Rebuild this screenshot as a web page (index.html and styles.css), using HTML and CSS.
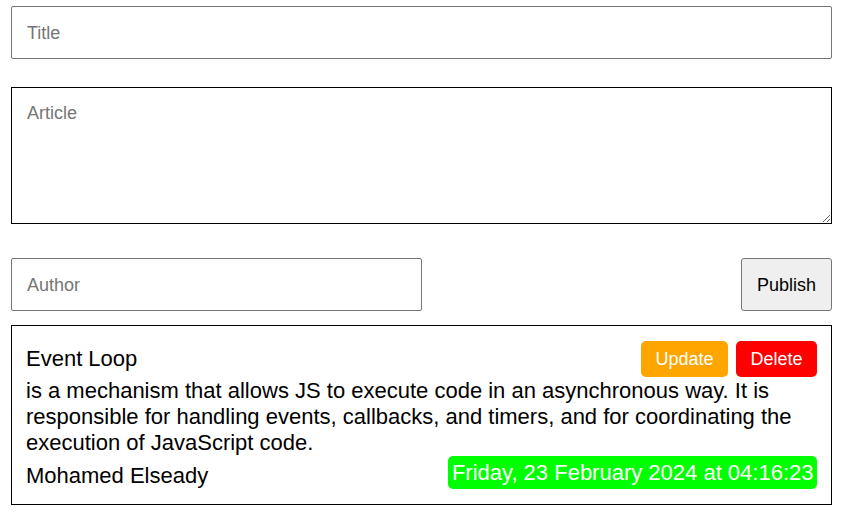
FILE: index.html
```html
<!DOCTYPE html>
<html>
<head>
<meta charset="utf-8">
<link rel="stylesheet" href="styles.css">
</head>
<body>
<div class="page">
  <input class="field title" type="text" placeholder="Title">
  <textarea class="field article" placeholder="Article"></textarea>
  <div class="row">
    <input class="field author" type="text" placeholder="Author">
    <button class="publish">Publish</button>
  </div>
  <div class="card">
    <div class="card-head">
      <span class="card-title">Event Loop</span>
      <div class="actions">
        <button class="btn update">Update</button>
        <button class="btn delete">Delete</button>
      </div>
    </div>
    <p class="card-body">is a mechanism that allows JS to execute code in an asynchronous way. It is responsible for handling events, callbacks, and timers, and for coordinating the execution of JavaScript code.</p>
    <div class="card-foot">
      <span class="card-author">Mohamed Elseady</span>
      <span class="date">Friday, 23 February 2024 at 04:16:23</span>
    </div>
  </div>
</div>
</body>
</html>
```
FILE: styles.css
```css
* { box-sizing: border-box; }
body {
  margin: 0;
  font-family: "Liberation Sans", Arial, sans-serif;
  background: #fff;
}
.page {
  padding: 6px 13px 0 11px;
}
.field {
  display: block;
  font-family: "Liberation Sans", Arial, sans-serif;
  font-size: 18px;
  line-height: 21px;
  padding: 16px 15px 14px;
  border: 1px solid #767676;
  border-radius: 2px;
  outline: none;
  margin: 0;
}
.field::placeholder { color: #757575; }
.title {
  width: 100%;
  height: 53px;
  margin-bottom: 28px;
}
.article {
  width: 100%;
  height: 137px;
  padding: 15px;
  border: 1px solid #000;
  border-radius: 0;
  resize: both;
  margin-bottom: 34px;
}
.row {
  display: flex;
  justify-content: space-between;
  align-items: flex-start;
  margin-bottom: 14px;
}
.author {
  width: 411px;
  height: 53px;
}
.publish {
  height: 53px;
  padding: 1px 15px 0;
  font-family: "Liberation Sans", Arial, sans-serif;
  font-size: 18px;
  color: #000;
  background: #efefef;
  border: 1px solid #767676;
  border-radius: 3px;
}
.card {
  border: 1px solid #000;
  padding: 15px 14px 15px 14px;
  font-size: 22px;
  line-height: 26px;
  color: #000;
}
.card-head {
  display: flex;
  justify-content: space-between;
  align-items: center;
}
.actions {
  display: flex;
  gap: 8px;
}
.btn {
  font-family: "Liberation Sans", Arial, sans-serif;
  font-size: 18px;
  line-height: 21px;
  padding: 7.5px 14.5px;
  border: none;
  border-radius: 5px;
  color: #fff;
}
.update { background: #ffa500; }
.delete { background: #ff0000; }
.card-body {
  margin: 0;
  padding-top: 1px;
}
.card-foot {
  display: flex;
  justify-content: space-between;
  align-items: flex-end;
}
.date {
  background: #00ff00;
  color: #fff;
  height: 33px;
  padding: 4px 3.5px;
  line-height: 25px;
  border-radius: 5px;
}
```
